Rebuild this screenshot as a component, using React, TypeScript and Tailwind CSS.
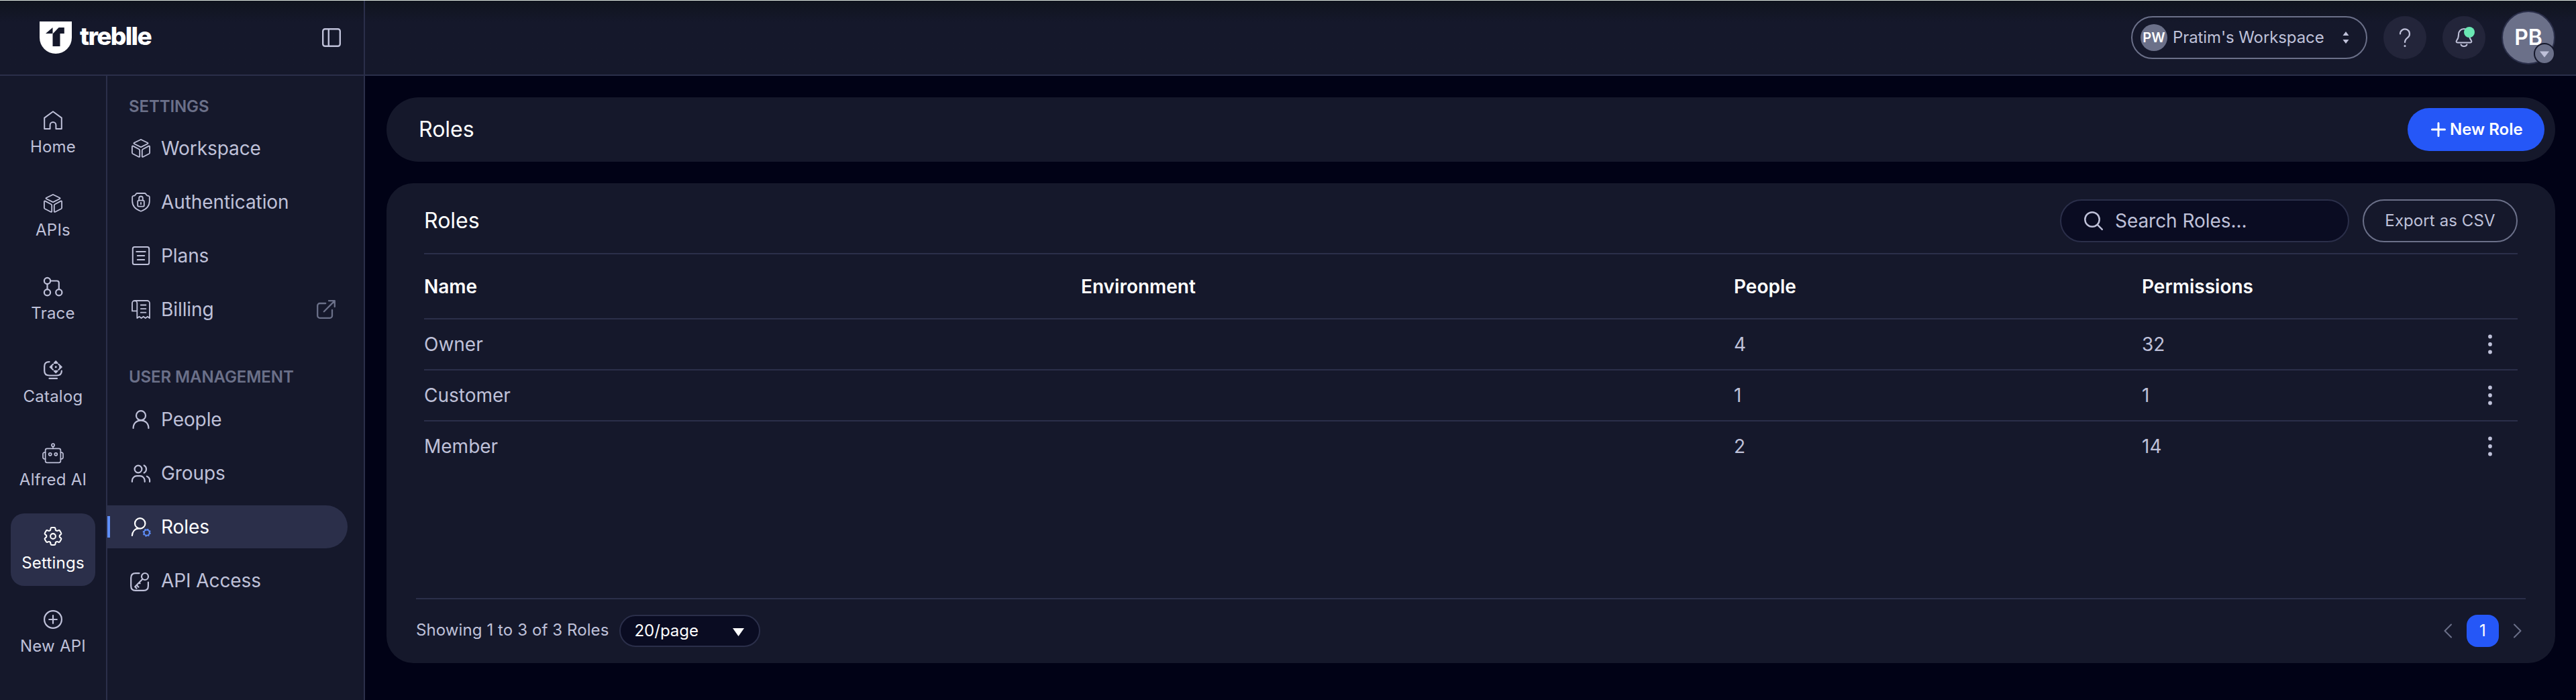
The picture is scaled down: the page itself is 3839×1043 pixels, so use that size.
import type { ReactNode } from 'react';

function Icon({ children, className = '', w = 2 }: { children: ReactNode; className?: string; w?: number }) {
  return (
    <svg
      viewBox="0 0 28 28"
      className={`h-7 w-7 shrink-0 overflow-visible ${className}`}
      fill="none"
      stroke="currentColor"
      strokeWidth={w}
      strokeLinecap="round"
      strokeLinejoin="round"
    >
      {children}
    </svg>
  );
}

const HomeIcon = () => (
  <Icon>
    <path d="M1.2 10.6 14 1.2l12.8 9.4V27h-8.4v-5.6a4.4 4.4 0 0 0-8.8 0V27H1.2z" />
  </Icon>
);

const CubeIcon = () => (
  <Icon w={1.8}>
    <path d="M14.7 1.2 24 5.8c.8.4.8 1 0 1.4l-9.3 4.7c-.4.2-1 .2-1.4 0L4 7.2c-.8-.4-.8-1 0-1.4l9.3-4.6c.4-.2 1-.2 1.4 0z" />
    <path d="M2.4 10.6 11 15.3c.8.4 1.2 1 1.2 1.900v8.700c0 .9-.6 1.200-1.400.8L2.100 22.300c-.8-.4-1.200-1-1.200-1.900v-8.900c0-.9.7-1.300 1.500-.9z" />
    <path d="M25.6 10.6 17 15.3c-.8.4-1.200 1-1.200 1.900v8.700c0 .9.6 1.200 1.400.8l8.700-4.400c.8-.4 1.200-1 1.200-1.900v-8.900c0-.9-.7-1.300-1.500-.9z" />
  </Icon>
);

const TraceIcon = () => (
  <Icon w={2.2}>
    <circle cx="5.5" cy="5.5" r="4.6" />
    <circle cx="5.5" cy="22.8" r="4.6" />
    <circle cx="22.8" cy="22.8" r="4.6" />
    <path d="M5.5 10.1v8.1M10.1 5.5h9.700a3 3 0 0 1 3 3v9.700" />
  </Icon>
);

const CatalogIcon = () => (
  <Icon w={2.2}>
    <path d="M8.5 2.2C3.5 2.2 1.2 4.2 1.2 8.7v6.800c0 4.800 2.500 7 7.500 7h10.500c5 0 7.700-2.200 7.700-7" />
    <path d="M8.5 26.9h11.500" />
    <g strokeWidth="1.8" fill="currentColor">
      <path d="m18.200 1.200 2.600 2.800h-5.200zM18.200 18.400l2.600-2.800h-5.200zM9.500 9.800l2.800-2.600v5.200zM26.900 9.800l-2.800-2.600v5.200z" />
    </g>
    <circle cx="18.200" cy="9.800" r="1.500" fill="currentColor" stroke="none" />
    <path d="m14 5.800-.6.600M22.400 5.800l.6.600M14 13.800l-.6-.6M22.400 13.800l.6-.6" />
  </Icon>
);

const RobotIcon = () => (
  <Icon w={1.7}>
    <circle cx="14" cy="2.2" r="2.1" />
    <path d="M14 4.300v3" />
    <rect x="2.600" y="7.300" width="22.800" height="21" rx="2.600" />
    <path d="M2.600 13.200H1.300a2.300 2.300 0 0 0-2.300 2.300v5a2.300 2.300 0 0 0 2.300 2.300h1.300M25.400 13.200h1.300a2.300 2.300 0 0 1 2.300 2.300v5a2.300 2.300 0 0 1-2.300 2.300h-1.300" />
    <circle cx="9.700" cy="15.800" r="2" />
    <circle cx="18.300" cy="15.800" r="2" />
  </Icon>
);

const GearIcon = () => (
  <svg
    viewBox="2.25 2.25 19.5 19.5"
    className="h-7 w-7 shrink-0 overflow-visible"
    fill="none"
    stroke="currentColor"
    strokeWidth="1.45"
    strokeLinecap="round"
    strokeLinejoin="round"
  >
    <path d="M9.594 3.940c.09-.542.56-.940 1.110-.940h2.593c.55 0 1.020.398 1.110.940l.213 1.281c.063.374.313.686.645.870.074.040.147.083.220.127.325.196.720.257 1.075.124l1.217-.456a1.125 1.125 0 0 1 1.370.490l1.296 2.247a1.125 1.125 0 0 1-.260 1.431l-1.003.827c-.293.241-.438.613-.430.992a7.723 7.723 0 0 1 0 .255c-.008.378.137.750.430.991l1.004.827c.424.350.534.955.260 1.430l-1.298 2.247a1.125 1.125 0 0 1-1.369.491l-1.217-.456c-.355-.133-.750-.072-1.076.124a6.470 6.470 0 0 1-.220.128c-.331.183-.581.495-.644.869l-.213 1.281c-.090.543-.560.940-1.110.940h-2.594c-.550 0-1.019-.398-1.110-.940l-.213-1.281c-.062-.374-.312-.686-.644-.870a6.520 6.520 0 0 1-.220-.127c-.325-.196-.720-.257-1.076-.124l-1.217.456a1.125 1.125 0 0 1-1.369-.490l-1.297-2.247a1.125 1.125 0 0 1 .260-1.431l1.004-.827c.292-.240.437-.613.430-.991a6.932 6.932 0 0 1 0-.255c.007-.380-.138-.751-.430-.992l-1.004-.827a1.125 1.125 0 0 1-.260-1.430l1.297-2.247a1.125 1.125 0 0 1 1.370-.491l1.216.456c.356.133.751.072 1.076-.124.072-.044.146-.086.220-.128.332-.183.582-.495.644-.869l.214-1.280Z" />
    <circle cx="12" cy="12" r="2.7" />
  </svg>
);

const PlusCircleIcon = () => (
  <Icon w={2.2}>
    <circle cx="14" cy="14" r="12.9" />
    <path d="M14 8.200v11.600M8.200 14h11.600" />
  </Icon>
);

const ShieldLockIcon = () => (
  <Icon w={1.8}>
    <path d="M8.300 1h11.400c.5 0 .9.200 1.200.6l1.700 2.200c.3.400.6.600 1.100.7l1.700.3c.9.200 1.400.8 1.400 1.700v6.300c0 6.800-5 12.100-12.100 14.700a2 2 0 0 1-1.400 0C6.200 24.900 1.200 19.600 1.200 12.800V6.500c0-.9.500-1.500 1.400-1.700l1.700-.3c.5-.1.800-.3 1.100-.7l1.700-2.200c.3-.4.700-.6 1.200-.6z" />
    <rect x="9.200" y="11.600" width="9.600" height="9" rx="1.600" />
    <path d="M11.200 11.600V8.300a2.800 2.800 0 0 1 5.600 0v3.300M14 15v2.200" />
  </Icon>
);

const PlansIcon = () => (
  <Icon>
    <rect x="1.800" y="1.100" width="24.400" height="26" rx="2.600" />
    <path d="M7.300 8.100h13.400M8.800 14h10.400M8.800 20h10.400" />
  </Icon>
);

const BillingIcon = () => (
  <Icon w={1.8}>
    <path d="M8.300 16.400H1V4.700A3.700 3.700 0 0 1 4.700 1h18.600A3.700 3.700 0 0 1 27 4.700V27l-3.100-2.300-3.100 2.300-3.100-2.300-3.100 2.300-3.100-2.300L8.300 27V4.700A3.700 3.700 0 0 0 4.700 1" />
    <path d="M13.800 7.500h7.600M13.800 13.100h7.600M13.800 18.700h7.600" />
  </Icon>
);

const PersonIcon = () => (
  <Icon w={2.2}>
    <circle cx="14" cy="8.200" r="7" />
    <path d="M2.600 27c0-7 4.800-11.700 11.400-11.700S25.400 20 25.400 27" />
  </Icon>
);

const GroupIcon = () => (
  <Icon w={2.2}>
    <circle cx="10" cy="8" r="5.400" />
    <path d="M.9 26.800v-1.600a7 7 0 0 1 7-7h4.800a7 7 0 0 1 7 7v1.600M18.700 2.500a6.200 6.200 0 0 1 0 11M22.900 18.700c2.700 1.100 4.200 3.600 4.200 6.500v1.600" />
  </Icon>
);

const RolesIcon = () => (
  <Icon w={2.2}>
    <circle cx="12.700" cy="8.900" r="7.700" />
    <path d="M.9 27c.3-5.900 4-10.200 9.900-10.700" />
    <g className="text-[#5f8ffa]" stroke="currentColor">
      <circle cx="22.700" cy="22.700" r="4.100" strokeWidth="2" />
      <circle cx="22.700" cy="22.700" r="5.400" strokeWidth="1.400" strokeDasharray="2.100 2.140" strokeLinecap="butt" />
    </g>
  </Icon>
);

const KeyIcon = () => (
  <Icon w={2.2} className="relative top-0.5 -left-0.5">
    <path d="M13.500 1.200H8C3.400 1.200 1.200 3.400 1.200 8v12c0 4.600 2.200 6.900 6.800 6.900h12c4.600 0 6.900-2.300 6.900-6.900v-5.500" />
    <circle cx="22" cy="6" r="5" />
    <path d="M18.500 9.700 7.200 21.300M9.600 18.900l2.900 2.800M7.200 21.300l2.300 2.300M13.400 15.100l1.200 1.200" />
  </Icon>
);

const ExternalIcon = () => (
  <Icon w={2.3} className="text-[#6b7089]">
    <path d="M13.200 5H4.600a3.400 3.400 0 0 0-3.400 3.400v15A3.400 3.400 0 0 0 4.600 26.800h15a3.400 3.400 0 0 0 3.400-3.400v-8.600M10.800 17.200 26.600 1.400M18 1.200h8.800V10" />
  </Icon>
);

const rail = [
  { label: 'Home', icon: <HomeIcon /> },
  { label: 'APIs', icon: <CubeIcon /> },
  { label: 'Trace', icon: <TraceIcon /> },
  { label: 'Catalog', icon: <CatalogIcon /> },
  { label: 'Alfred AI', icon: <RobotIcon /> },
  { label: 'Settings', icon: <GearIcon />, active: true },
  { label: 'New API', icon: <PlusCircleIcon /> },
];

type NavEntry = { label: string; icon: ReactNode; active?: boolean; external?: boolean };

const settingsNav: NavEntry[] = [
  { label: 'Workspace', icon: <CubeIcon /> },
  { label: 'Authentication', icon: <ShieldLockIcon /> },
  { label: 'Plans', icon: <PlansIcon /> },
  { label: 'Billing', icon: <BillingIcon />, external: true },
];

const userNav: NavEntry[] = [
  { label: 'People', icon: <PersonIcon /> },
  { label: 'Groups', icon: <GroupIcon /> },
  { label: 'Roles', icon: <RolesIcon />, active: true },
  { label: 'API Access', icon: <KeyIcon /> },
];

const rows = [
  { name: 'Owner', people: 4, permissions: 32 },
  { name: 'Customer', people: 1, permissions: 1 },
  { name: 'Member', people: 2, permissions: 14 },
];

function NavItem({ label, icon, active, external }: NavEntry) {
  return (
    <a
      className={
        active
          ? 'mr-6 flex h-16 items-center rounded-r-full bg-[#2b2f4a] text-white'
          : 'mr-6 flex h-16 items-center'
      }
    >
      <span className={active ? 'mr-8 h-8 w-1 bg-[#5f8ffa]' : 'mr-8 h-8 w-1'} />
      {icon}
      <span className="ml-4 flex-1 text-[28px] leading-9 tracking-[-0.003em]">{label}</span>
      {external && (
        <span className="mr-[18px]">
          <ExternalIcon />
        </span>
      )}
    </a>
  );
}

function Logo() {
  return (
    <div className="flex items-center">
      <svg viewBox="0 0 48 48" className="h-12 w-12">
        <path d="M0 0h48v24a24 24 0 0 1-48 0z" fill="#fff" />
        <path d="M9 18l10.500-9v9z" fill="#15182b" />
        <path d="M19.500 18.500 28.600 9h8.200v8.900h-6.300V37h-11z" fill="#15182b" />
      </svg>
      <span className="ml-3 pb-1 text-[37px] leading-10 font-extrabold tracking-[-0.045em] text-white">treblle</span>
    </div>
  );
}

const cols = 'grid grid-cols-[979px_973px_608px_1fr] items-center';

export default function App() {
  return (
    <div className="flex h-[1043px] w-full flex-col overflow-hidden bg-[#010216] font-['Inter',sans-serif] text-[#bfc1d9]">
      <header className="flex h-[113px] shrink-0 border-t border-b-2 border-t-[#dfe8e2] border-b-[#2b2f4a] bg-[#15182b] bg-linear-to-b from-[#10141e] to-[#15182b] to-[32px]">
        <div className="flex w-[544px] items-center justify-between border-r-2 border-[#2b2f4a] pr-[34px] pl-[59px]">
          <Logo />
          <Icon w={2.4}>
            <rect x="1.200" y="1.200" width="25.600" height="25.600" rx="3.200" />
            <path d="M9.800 1.200v25.600" />
          </Icon>
        </div>
        <div className="flex flex-1 items-center justify-end pr-[31px]">
          <div className="flex h-16 w-[352px] items-center rounded-full border-2 border-[#6b7089] pl-3">
            <span className="flex h-10 w-10 items-center justify-center rounded-full bg-[#6b7089] text-xl font-semibold text-white">
              PW
            </span>
            <span className="ml-2 flex-1 text-2xl tracking-[-0.004em] whitespace-nowrap">Pratim's Workspace</span>
            <svg viewBox="0 0 10 18" className="mr-[25px] h-[18px] w-2.5" fill="currentColor">
              <path d="M5 0l4.500 6h-9zM5 18l4.500-6h-9z" />
            </svg>
          </div>
          <div className="ml-6 flex h-16 w-16 items-center justify-center rounded-full bg-[#23253a]">
            <Icon w={2.2}>
              <path d="M7 8.400a7 7 0 1 1 11.300 5.500c-2.800 2.200-4.300 3.600-4.300 7.100" />
              <circle cx="14" cy="26.400" r="1.500" fill="currentColor" stroke="none" />
            </Icon>
          </div>
          <div className="relative ml-6 flex h-16 w-16 items-center justify-center rounded-full bg-[#23253a]">
            <Icon>
              <path d="M14 1.100c-4.800 0-8 3.600-8 8.300 0 4.600-.8 6.500-2.900 9-.9 1.200-.5 3 1.300 3h19.200c1.800 0 2.200-1.800 1.300-3-2.100-2.500-2.900-4.400-2.900-9 0-4.700-3.200-8.300-8-8.300z" />
              <path d="M9.500 24.400c.7 1.700 2.400 2.700 4.500 2.700s3.800-1 4.500-2.700" />
            </Icon>
            <span className="absolute top-4 left-8 h-4 w-4 rounded-full bg-[#6ae7b3]" />
          </div>
          <div className="relative ml-6 flex h-20 w-20 items-center justify-center rounded-full border-2 border-[#2b2f4a] bg-[#6b7089] text-[32px] font-semibold text-white">
            PB
            <span className="absolute top-[46px] left-[46px] flex h-8 w-8 items-center justify-center rounded-full border-2 border-[#15182b] bg-[#6b7089] text-[#bfc1d9]">
              <svg viewBox="0 0 14 10" className="mt-0.5 h-2.5 w-3.5" fill="currentColor">
                <path d="M0 .5h14L7 9.500z" />
              </svg>
            </span>
          </div>
        </div>
      </header>

      <div className="flex flex-1">
        <nav className="flex w-40 flex-col gap-4 border-r-2 border-[#2b2f4a] bg-[#15182b] px-4 pt-8">
          {rail.map((r) => (
            <a
              key={r.label}
              className={
                r.active
                  ? 'flex h-[108px] flex-col items-center rounded-[20px] bg-[#2b2f4a] pt-5 text-white'
                  : 'flex h-[108px] flex-col items-center pt-5'
              }
            >
              {r.icon}
              <span className="mt-2 text-2xl leading-9 tracking-[0.009em] whitespace-nowrap">{r.label}</span>
            </a>
          ))}
        </nav>
        <aside className="flex w-[384px] flex-col border-r-2 border-[#2b2f4a] bg-[#15182b] pt-[30px]">
          <h2 className="pl-8 text-2xl leading-8 font-semibold tracking-[-0.004em] text-[#6b7089]">SETTINGS</h2>
          <div className="mt-3.5 flex flex-col gap-4">
            {settingsNav.map((n) => (
              <NavItem key={n.label} {...n} />
            ))}
          </div>
          <h2 className="mt-[53px] pl-8 text-2xl leading-8 font-semibold tracking-[-0.004em] text-[#6b7089]">
            USER MANAGEMENT
          </h2>
          <div className="mt-[15px] flex flex-col gap-4">
            {userNav.map((n) => (
              <NavItem key={n.label} {...n} />
            ))}
          </div>
        </aside>

        <main className="flex flex-1 flex-col gap-8 pt-8 pr-[31px] pl-8">
          <section className="flex h-24 items-center justify-between rounded-full bg-[#15182b] pr-4 pl-12">
            <h1 className="text-[32px] leading-10 text-white">Roles</h1>
            <button className="flex h-16 w-[204px] items-center rounded-full bg-[#2557f7] pl-[35px] text-2xl font-semibold text-white">
              <svg viewBox="0 0 22 22" className="h-[22px] w-[22px]" stroke="currentColor" strokeWidth="3" strokeLinecap="round">
                <path d="M11 1.500v19M1.500 11h19" />
              </svg>
              <span className="ml-1.5 whitespace-nowrap">New Role</span>
            </button>
          </section>

          <section className="flex h-[715px] flex-col rounded-[40px] bg-[#15182b] px-11 pt-6">
            <div className="mx-3 flex h-20 items-start">
              <h2 className="flex-1 text-[32px] leading-16 text-white">Roles</h2>
              <div className="flex h-16 w-[431px] items-center rounded-full border-2 border-[#2b2f4a] bg-[#0a0c22] pl-[34px]">
                <Icon w={2.5}>
                  <circle cx="12" cy="12" r="10.700" />
                  <path d="m19.800 19.800 7 7" />
                </Icon>
                <span className="ml-[18px] text-[28px] tracking-[-0.002em]">Search Roles...</span>
              </div>
              <button className="ml-5 flex h-16 w-[231px] items-center justify-center rounded-full border-2 border-[#6b7089] text-2xl tracking-[0.004em]">
                Export as CSV
              </button>
            </div>
            <div className="mx-3 text-[28px]">
              <div className={`${cols} h-[99px] border-y-2 border-[#2b2f4a] font-semibold text-white`}>
                <span>Name</span>
                <span>Environment</span>
                <span>People</span>
                <span>Permissions</span>
              </div>
              <div>
                {rows.map((r) => (
                  <div key={r.name} className={`${cols} h-[76px] border-b-2 border-[#2b2f4a] last:border-transparent`}>
                    <span>{r.name}</span>
                    <span />
                    <span>{r.people}</span>
                    <span className="flex items-center justify-between pr-[38px]">
                      {r.permissions}
                      <svg viewBox="0 0 6 30" className="h-[30px] w-1.5" fill="currentColor">
                        <circle cx="3" cy="3.500" r="2.900" />
                        <circle cx="3" cy="15" r="2.900" />
                        <circle cx="3" cy="26.500" r="2.900" />
                      </svg>
                    </span>
                  </div>
                ))}
              </div>
            </div>
            <footer className="mt-auto flex h-[97px] items-center border-t-2 border-[#2b2f4a] pb-0.5">
              <span className="pb-0.5 text-2xl tracking-[0.004em]">Showing 1 to 3 of 3 Roles</span>
              <div className="ml-4 flex h-12 w-[210px] items-center justify-between rounded-full border-2 border-[#2b2f4a] bg-[#0a0c22] pr-[22px] pl-5 text-2xl text-white">
                20/page
                <svg viewBox="0 0 17 12" className="mt-1 h-3 w-[17px]" fill="currentColor">
                  <path d="M0 0h17L8.500 12z" />
                </svg>
              </div>
              <div className="ml-auto flex items-center pr-1.5">
                <svg viewBox="0 0 12 22" className="h-[22px] w-3 text-[#6b7089]" fill="none" stroke="currentColor" strokeWidth="2" strokeLinecap="round" strokeLinejoin="round">
                  <path d="M11 1.500 1.500 11l9.500 9.500" />
                </svg>
                <span className="mx-[22px] flex h-12 w-12 items-center justify-center rounded-2xl bg-[#2557f7] text-2xl text-white">1</span>
                <svg viewBox="0 0 12 22" className="h-[22px] w-3 text-[#6b7089]" fill="none" stroke="currentColor" strokeWidth="2" strokeLinecap="round" strokeLinejoin="round">
                  <path d="M1 1.500l9.500 9.500L1 20.500" />
                </svg>
              </div>
            </footer>
          </section>
        </main>
      </div>
    </div>
  );
}
